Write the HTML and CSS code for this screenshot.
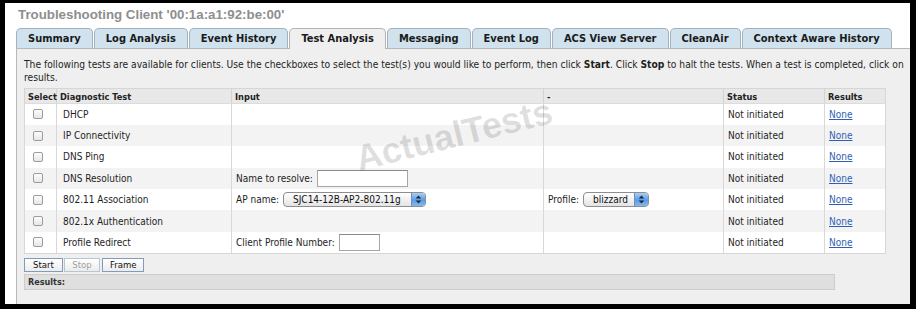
FILE: index.html
```html
<!DOCTYPE html>
<html lang="en">
<head>
<meta charset="utf-8">
<title>Troubleshooting Client</title>
<link rel="stylesheet" href="styles.css">
</head>
<body>
<div class="frame">
  <h1 class="title">Troubleshooting Client '00:1a:a1:92:be:00'</h1>
  <ul class="tabs">
    <li class="tab">Summary</li>
    <li class="tab">Log Analysis</li>
    <li class="tab">Event History</li>
    <li class="tab active">Test Analysis</li>
    <li class="tab">Messaging</li>
    <li class="tab">Event Log</li>
    <li class="tab">ACS View Server</li>
    <li class="tab">CleanAir</li>
    <li class="tab">Context Aware History</li>
  </ul>
  <div class="panel">
    <p class="intro">The following tests are available for clients. Use the checkboxes to select the test(s) you would like to perform, then click <b>Start</b>. Click <b>Stop</b> to halt the tests. When a test is completed, click on<br>results.</p>
    <table class="tests">
      <colgroup>
        <col class="c-select"><col class="c-name"><col class="c-input"><col class="c-extra"><col class="c-status"><col class="c-results">
      </colgroup>
      <thead>
        <tr><th>Select</th><th>Diagnostic Test</th><th>Input</th><th>-</th><th>Status</th><th>Results</th></tr>
      </thead>
      <tbody>
        <tr><td class="sel"><span class="check"></span></td><td class="name">DHCP</td><td></td><td></td><td>Not initiated</td><td><a href="#">None</a></td></tr>
        <tr><td class="sel"><span class="check"></span></td><td class="name">IP Connectivity</td><td></td><td></td><td>Not initiated</td><td><a href="#">None</a></td></tr>
        <tr><td class="sel"><span class="check"></span></td><td class="name">DNS Ping</td><td></td><td></td><td>Not initiated</td><td><a href="#">None</a></td></tr>
        <tr><td class="sel"><span class="check"></span></td><td class="name">DNS Resolution</td><td><span class="field">Name to resolve: <span class="textbox resolve"></span></span></td><td></td><td>Not initiated</td><td><a href="#">None</a></td></tr>
        <tr><td class="sel"><span class="check"></span></td><td class="name">802.11 Association</td><td><span class="field">AP name: <span class="select ap"><span class="select-value">SJC14-12B-AP2-802.11g</span><span class="select-arrows"><svg width="7" height="9" viewBox="0 0 7 9"><path d="M3.5 0.5 L6.3 3.6 H0.7 Z M3.5 8.5 L6.3 5.4 H0.7 Z" fill="#1d2a3a"/></svg></span></span></span></td><td><span class="field">Profile: <span class="select profile"><span class="select-value">blizzard</span><span class="select-arrows"><svg width="7" height="9" viewBox="0 0 7 9"><path d="M3.5 0.5 L6.3 3.6 H0.7 Z M3.5 8.5 L6.3 5.4 H0.7 Z" fill="#1d2a3a"/></svg></span></span></span></td><td>Not initiated</td><td><a href="#">None</a></td></tr>
        <tr><td class="sel"><span class="check"></span></td><td class="name">802.1x Authentication</td><td></td><td></td><td>Not initiated</td><td><a href="#">None</a></td></tr>
        <tr><td class="sel"><span class="check"></span></td><td class="name">Profile Redirect</td><td><span class="field">Client Profile Number: <span class="textbox number"></span></span></td><td></td><td>Not initiated</td><td><a href="#">None</a></td></tr>
      </tbody>
    </table>
    <div class="actions">
      <button class="btn start" type="button">Start</button>
      <button class="btn stop" type="button" disabled>Stop</button>
      <button class="btn frame-btn" type="button">Frame</button>
    </div>
    <div class="results">Results:</div>
    <div class="watermark">ActualTests</div>
  </div>
</div>
</body>
</html>
```

FILE: styles.css
```css
* { box-sizing: border-box; }
html, body { margin: 0; padding: 0; background: #fff; }
body {
  font-family: "DejaVu Sans Condensed", "DejaVu Sans", "Liberation Sans", sans-serif;
  font-size: 10px;
  color: #1e1e1e;
}
.frame {
  width: 916px;
  height: 309px;
  border-style: solid;
  border-color: #000;
  border-width: 3px 6px 5px 5px;
  padding-left: 11px;
  display: flex;
  flex-direction: column;
}
.title {
  margin: 0 0 0 2px;
  height: 25px;
  padding-top: 4px;
  font: bold 13.3px/16px "Liberation Sans", Arial, sans-serif;
  color: #8e8e8e;
}
.tabs {
  display: flex;
  align-items: flex-start;
  gap: 1px;
  list-style: none;
  margin: 0;
  padding: 0;
  height: 20px;
  position: relative;
  z-index: 1;
}
.tab {
  height: 20px;
  padding: 0 11px;
  line-height: 19px;
  background: #d0e2ee;
  border: 1px solid #a3b2be;
  border-bottom: 0;
  border-radius: 5px 5px 0 0;
  font-weight: bold;
  font-size: 11px;
  color: #1a1a1a;
  white-space: nowrap;
}
.tab.active {
  height: 21px;
  background: #efefef;
  border-color: #b3b3b3;
}
.panel {
  flex: 1;
  position: relative;
  background: #efefef;
  border-top: 1px solid #b8b8b8;
  border-left: 1px solid #b8b8b8;
  padding: 9px 0 0 7px;
}
.intro {
  margin: 0;
  font-size: 10.2px;
  line-height: 13px;
  white-space: nowrap;
}
.tests {
  margin-top: 4px;
  width: 861px;
  table-layout: fixed;
  border-collapse: collapse;
  background: #fff;
  border: 1px solid #d6d6d6;
}
.c-select { width: 32px; }
.c-name { width: 175px; }
.c-input { width: 312px; }
.c-extra { width: 180px; }
.c-status { width: 101px; }
.c-results { width: 61px; }
.tests th {
  height: 15px;
  padding: 0 3px;
  background: #e8e8e8;
  text-align: left;
  font-size: 9.2px;
  font-weight: bold;
  color: #222;
  border-left: 1px solid #d3d3d3;
  border-bottom: 1px solid #dcdcdc;
}
.tests td {
  height: 21.4px;
  padding: 0 4px;
  border-left: 1px solid #d8d8d8;
  white-space: nowrap;
}
.tests tbody tr:nth-child(even) td { background: #f3f3f3; }
.tests td.sel { padding-left: 8px; }
.tests td.name { padding-left: 6px; }
.check {
  display: block;
  width: 10px;
  height: 10px;
  border: 1px solid #9c9c9c;
  border-radius: 2px;
  background: linear-gradient(#fdfdfd, #e6e6e6);
}
.tests a { color: #2f5fb3; text-decoration: underline; }
.field {
  display: inline-flex;
  align-items: center;
  gap: 4px;
}
.textbox {
  display: inline-block;
  height: 17px;
  background: #fff;
  border: 1px solid #a6a6a6;
  border-top-color: #8a8a8a;
}
.textbox.resolve { width: 91px; }
.textbox.number { width: 41px; }
.select {
  display: inline-flex;
  height: 15px;
  border: 1px solid #8e8e8e;
  border-radius: 4px;
  background: linear-gradient(#ffffff, #e4e4e4);
  overflow: hidden;
}
.select.ap { width: 143px; }
.select.profile { width: 66px; }
.select-value {
  flex: 1;
  padding-left: 9px;
  line-height: 13px;
  font-size: 10px;
  color: #111;
}
.select-arrows {
  width: 14px;
  display: flex;
  align-items: center;
  justify-content: center;
  background: linear-gradient(#a9cff5, #5b9be6 55%, #83b9f0);
  border-left: 1px solid #6f8fb8;
}
.actions {
  display: flex;
  gap: 1px;
  margin-top: 4px;
}
.btn {
  height: 14px;
  padding: 0 7px;
  font: 9.5px/12px "DejaVu Sans Condensed", "DejaVu Sans", sans-serif;
  color: #111;
  background: linear-gradient(#ffffff, #ececec);
  border: 1px solid #7f9db9;
}
.btn.start { width: 39px; }
.btn.stop { width: 36px; color: #a0a0a0; border-color: #b7c6d3; }
.btn.frame-btn { width: 42px; margin-left: 1px; }
.results {
  margin-top: 2px;
  width: 811px;
  height: 16px;
  padding-left: 3px;
  background: #dfdfdf;
  border: 1px solid #cdcdcd;
  font-size: 9px;
  font-weight: bold;
  line-height: 14px;
  color: #333;
}
.watermark {
  position: absolute;
  left: 437px;
  top: 86px;
  transform: translate(-50%, -50%) rotate(-14deg);
  font: bold 36px "Liberation Sans", Arial, sans-serif;
  color: rgba(0, 0, 0, 0.13);
  white-space: nowrap;
  pointer-events: none;
}
```
